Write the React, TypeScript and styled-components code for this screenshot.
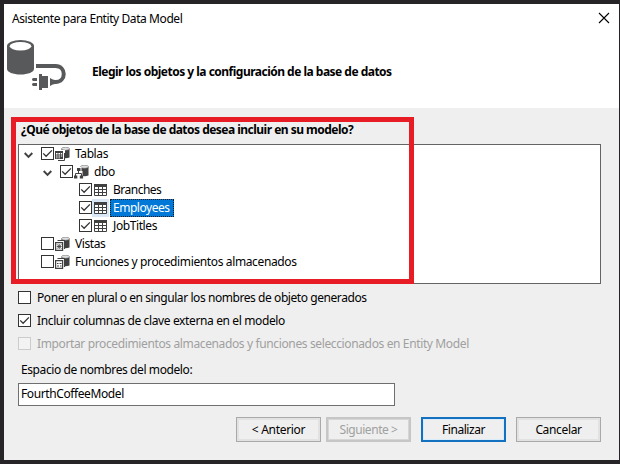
import React from "react";
import styled, { createGlobalStyle } from "styled-components";

const GlobalStyle = createGlobalStyle`
  * { box-sizing: border-box; }
  body { margin: 0; background: #262427; overflow: hidden; }
`;

const Desktop = styled.div`
  width: 620px;
  height: 464px;
  padding: 4px 1px 4px 4px;
  background: #262427;
  font-family: "Noto Sans", "Open Sans", sans-serif;
  font-size: 12px;
  line-height: 16px;
  color: #000;
`;

const Dialog = styled.main`
  display: flex;
  flex-direction: column;
  width: 615px;
  height: 456px;
  background: #efefef;
`;

const Header = styled.header`
  height: 104px;
  background: #fff;
`;

const TitleBar = styled.div`
  display: flex;
  justify-content: space-between;
  height: 35px;
  padding: 7px 9px 0 8px;
`;

const Banner = styled.div`
  display: flex;
  gap: 21px;
  padding-left: 2px;
`;

const CloseButton = styled.button`
  width: 12px;
  height: 12px;
  margin-top: 1px;
  padding: 0;
  border: 0;
  background: none;
  svg { display: block; }
`;

const Label = styled.span<{ $spacing?: number; $bold?: boolean }>`
  display: block;
  white-space: pre;
  letter-spacing: ${(p) => p.$spacing ?? -0.4}px;
  font-weight: ${(p) => (p.$bold ? 700 : 400)};
`;

const BannerTitle = styled.h1`
  margin: 25px 0 0;
  font-size: inherit;
  line-height: 16px;
`;

const Content = styled.section`
  position: relative;
  padding: 14px 18px 0 14px;
`;

const Question = styled.div`
  height: 22px;
  padding-left: 3px;
`;

const Tree = styled.div`
  width: 583px;
  height: 140px;
  border: 1px solid #646464;
  background: #fff;
`;

const TreeRow = styled.div<{ $level: number }>`
  display: flex;
  align-items: flex-start;
  height: 18px;
  padding-left: ${(p) => 3 + p.$level * 19}px;
`;

const Expander = styled.span`
  display: flex;
  width: 19px;
  height: 18px;
  padding: 7px 0 0 2px;
`;

const CheckFrame = styled.span<{ $disabled?: boolean }>`
  flex: none;
  width: 13px;
  height: 13px;
  border: 1px solid ${(p) => (p.$disabled ? "#cccccc" : "#333")};
  background: ${(p) => (p.$disabled ? "#f3f3f3" : "#fff")};
  svg { display: block; }
  ${TreeRow} & { margin-top: 2px; }
`;

const IconCell = styled.span<{ $lit?: boolean; $inset: number }>`
  display: flex;
  width: 17px;
  height: 18px;
  padding: 2px 0 0 ${(p) => p.$inset}px;
  background: ${(p) => (p.$lit ? "#d9e8f7" : "transparent")};
`;

const NodeText = styled.span<{ $selected?: boolean }>`
  height: 18px;
  margin-left: 1px;
  padding: 0 3px 0 2px;
  border: 1px ${(p) => (p.$selected ? "dotted #1b1b1b" : "solid transparent")};
  line-height: 15px;
  background: ${(p) => (p.$selected ? "#0078d7" : "transparent")};
  color: ${(p) => (p.$selected ? "#fff" : "#000")};
`;

const Highlight = styled.div`
  position: absolute;
  left: 7px;
  top: 9px;
  width: 403px;
  height: 167px;
  border: 5px solid #e81c24;
  pointer-events: none;
`;

const Options = styled.div`
  display: grid;
  grid-auto-rows: 23px;
  padding: 2px 0 0 14px;
`;

const Option = styled.label<{ $disabled?: boolean }>`
  display: flex;
  align-items: center;
  gap: 6px;
  color: ${(p) => (p.$disabled ? "#a0a0a0" : "#000")};
`;

const Namespace = styled.div`
  padding: 7px 0 0 14px;
`;

const NamespaceLabel = styled.div`
  height: 21px;
  padding-left: 3px;
`;

const Field = styled.div`
  width: 377px;
  height: 23px;
  padding: 2px 0 0 2px;
  border: 1px solid #6f6f6f;
  background: #fff;
`;

const Footer = styled.footer`
  display: flex;
  justify-content: flex-end;
  padding: 11px 18px 0 0;
`;

const Button = styled.button<{ $kind?: "primary" | "disabled"; $gap?: number }>`
  display: flex;
  align-items: center;
  justify-content: center;
  width: 85px;
  height: 25px;
  margin-left: ${(p) => p.$gap ?? 0}px;
  padding: 0;
  font: inherit;
  border: ${(p) =>
    p.$kind === "primary" ? "2px solid #1471c0" : p.$kind === "disabled" ? "2px solid #c6c6c6" : "1px solid #a9a9a9"};
  box-shadow: ${(p) =>
    p.$kind === "primary" ? "inset 0 0 0 1px #d8ecfb" : p.$kind === "disabled" ? "inset 0 0 0 1px #d6d6d6" : "inset 0 0 0 2px #e2e2e2"};
  background: #efefef;
  color: ${(p) => (p.$kind === "disabled" ? "#a0a0a0" : "#000")};
`;

const Check = ({ on, disabled }: { on?: boolean; disabled?: boolean }) => (
  <CheckFrame $disabled={disabled}>
    {on && (
      <svg width="11" height="11" viewBox="0 0 11 11">
        <path d="M1.2 5.4 4.1 8.3 9.9 2.4" fill="none" stroke="#333" strokeWidth="1.3" />
      </svg>
    )}
  </CheckFrame>
);

const Chevron = () => (
  <svg width="9" height="7" viewBox="0 0 9 7">
    <path d="M.7 1 4.5 4.8 8.3 1" fill="none" stroke="#404040" strokeWidth="1.9" />
  </svg>
);

type IconKind = "tables" | "schema" | "table" | "views" | "procs";

const Cylinder = () => (
  <>
    <path d="M6.500 1.500V10.500q4 1.500 8 0V1.500z" fill="#414141" />
    <path d="M6.500 1.600q0-1.300 4-1.300t4 1.300q0 1.700-4 1.700t-4-1.700z" fill="#dedede" stroke="#777" strokeWidth=".6" />
  </>
);

const NodeIcon = ({ kind }: { kind: IconKind }) => (
  <svg width="15" height="15" viewBox="0 0 15 15">
    {kind === "table" && (
      <>
        <path d="M.5 1.500h12v11H.5z" fill="#fff" stroke="#414141" />
        <path d="M0 1h13v3H0z" fill="#414141" />
        <path d="M4.500 4v8M8.500 4v8M1 6.500h12M1 9.500h12" stroke="#414141" />
      </>
    )}
    {kind === "tables" && (
      <>
        <Cylinder />
        <path d="M-1 3h11v12h-11z" fill="#fff" />
        <path d="M0 4h8v8H0z" fill="#414141" />
        <path d="M1 6h1.600v1.500H1zM3.400 6H5v1.500H3.400zM5.800 6h1.400v1.500H5.800zM1 8.500h1.600v1H1zM3.400 8.500H5v1H3.400zM5.800 8.500h1.400v1H5.800zM1 10.400h1.600v.8H1zM3.400 10.400H5v.8H3.400z" fill="#fff" />
        <path d="M9.500 6v7.500H3" fill="none" stroke="#414141" />
      </>
    )}
    {kind === "schema" && (
      <>
        <Cylinder />
        <path d="M-1 2h8.500v4h1v9H-1z" fill="#fff" />
        <path d="M4.500 5v4M1.500 12V8.500h6V12" fill="none" stroke="#414141" />
        <path d="M3 3h3.500v3H3zM0 10.500h3.300v3H0zM5.800 10.500h3.300v3H5.800z" fill="#414141" />
      </>
    )}
    {(kind === "views" || kind === "procs") && (
      <>
        <Cylinder />
        <path d="M-1 3h11v12h-11z" fill="#fff" />
        <path d="M2.500 3.500h7v8.500" fill="none" stroke="#414141" strokeWidth="1.1" />
        <path d="M.6 5.600h7v7.800h-7z" fill="#fff" stroke="#414141" strokeWidth="1.2" />
        {kind === "views" ? (
          <path d="M2 7.300l4.400 4.400M6.400 7.300 2 11.700M4.200 7v5M1.800 9.500h4.800" stroke="#444" strokeWidth=".9" />
        ) : (
          <path d="M2 8.500h1.500M4.500 8.500h2M2 11h2M5 11h1.500" stroke="#414141" />
        )}
      </>
    )}
  </svg>
);

const NODES: {
  text: string; level: number; icon: IconKind; on?: boolean; open?: boolean; selected?: boolean; spacing?: number;
}[] = [
  { text: "Tablas", level: 0, icon: "tables", on: true, open: true },
  { text: "dbo", level: 1, icon: "schema", on: true, open: true },
  { text: "Branches", level: 2, icon: "table", on: true, spacing: -0.5 },
  { text: "Employees", level: 2, icon: "table", on: true, selected: true, spacing: -0.47 },
  { text: "JobTitles", level: 2, icon: "table", on: true },
  { text: "Vistas", level: 0, icon: "views" },
  { text: "Funciones y procedimientos almacenados", level: 0, icon: "procs", spacing: -0.37 },
];

const DatabasePlug = () => (
  <svg width="65" height="56" viewBox="6 39 65 56">
    <path d="M7 46v23c0 3 6 5.500 13.500 5.500S34 72 34 69V46z" fill="#58595b" />
    <ellipse cx="20.500" cy="46" rx="13.500" ry="6" fill="#58595b" />
    <ellipse cx="20.500" cy="46.300" rx="10.800" ry="4.200" fill="#fff" />
    <path d="M36 66h19.500c11 0 11 16 0 16h-2.500" fill="none" stroke="#58595b" strokeWidth="4" />
    <path d="M39 74h3v2h6v12h-6v2h-3zM50 78q3 2 5 2v4q-2 0-5 2z" fill="#58595b" />
    <path d="M33 78h4v3h-4q-2-1.500 0-3zM33 83h4v3h-4q-2-1.500 0-3z" fill="#58595b" />
  </svg>
);

export default function App() {
  return (
    <>
      <GlobalStyle />
      <Desktop>
        <Dialog>
          <Header>
            <TitleBar>
              <Label $spacing={-0.42}>Asistente para Entity Data Model</Label>
              <CloseButton aria-label="Cerrar">
                <svg width="12" height="12" viewBox="0 0 12 12">
                  <path d="M1 1l10 10M11 1 1 11" stroke="#000" strokeWidth="1.1" />
                </svg>
              </CloseButton>
            </TitleBar>
            <Banner>
              <DatabasePlug />
              <BannerTitle>
                <Label $bold $spacing={-0.51}>Elegir los objetos y la configuración de la base de datos</Label>
              </BannerTitle>
            </Banner>
          </Header>
          <Content>
            <Question>
              <Label $bold $spacing={-0.52}>¿Qué objetos de la base de datos desea incluir en su modelo?</Label>
            </Question>
            <Tree>
              {NODES.map((n) => (
                <TreeRow key={n.text} $level={n.level}>
                  <Expander>{n.open && <Chevron />}</Expander>
                  <Check on={n.on} />
                  <IconCell $lit={n.selected} $inset={n.icon === "table" ? 2 : 1}>
                    <NodeIcon kind={n.icon} />
                  </IconCell>
                  <NodeText $selected={n.selected}>
                    <Label $spacing={n.spacing}>{n.text}</Label>
                  </NodeText>
                </TreeRow>
              ))}
            </Tree>
            <Highlight />
          </Content>
          <Options>
            <Option>
              <Check />
              <Label $spacing={-0.43}>Poner en plural o en singular los nombres de objeto generados</Label>
            </Option>
            <Option>
              <Check on />
              <Label $spacing={-0.37}>Incluir columnas de clave externa en el modelo</Label>
            </Option>
            <Option $disabled>
              <Check disabled />
              <Label $spacing={-0.37}>Importar procedimientos almacenados y funciones seleccionados en Entity Model</Label>
            </Option>
          </Options>
          <Namespace>
            <NamespaceLabel>
              <Label>Espacio de nombres del modelo:</Label>
            </NamespaceLabel>
            <Field>
              <Label>FourthCoffeeModel</Label>
            </Field>
          </Namespace>
          <Footer>
            <Button><Label $spacing={-0.3}>&lt; Anterior</Label></Button>
            <Button $kind="disabled" $gap={5}><Label $spacing={-0.45}>Siguiente &gt;</Label></Button>
            <Button $kind="primary" $gap={10}><Label $spacing={-0.45}>Finalizar</Label></Button>
            <Button $gap={10}><Label $spacing={-0.35}>Cancelar</Label></Button>
          </Footer>
        </Dialog>
      </Desktop>
    </>
  );
}
